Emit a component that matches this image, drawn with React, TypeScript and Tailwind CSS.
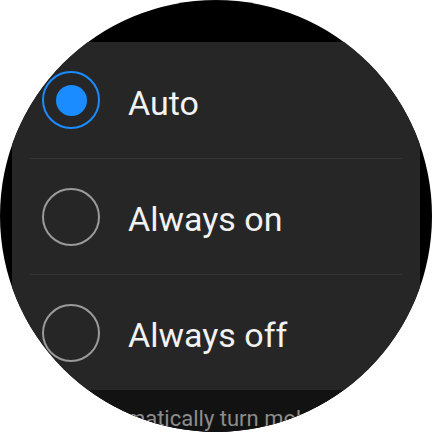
import React, { useState } from 'react';

type Mode = 'auto' | 'on' | 'off';

const options: { id: Mode; label: string }[] = [
  { id: 'auto', label: 'Auto' },
  { id: 'on', label: 'Always on' },
  { id: 'off', label: 'Always off' },
];

function Radio({ checked }: { checked: boolean }) {
  return (
    <span
      className={`flex h-[58px] w-[58px] shrink-0 items-center justify-center rounded-full border-2 ${
        checked ? 'border-[#1a8cff]' : 'border-[#9a9a9a]'
      }`}
    >
      {checked && <span className="h-[31px] w-[31px] rounded-full bg-[#1a8cff]" />}
    </span>
  );
}

export default function App() {
  const [mode, setMode] = useState<Mode>('auto');

  return (
    <div className="h-[432px] w-[432px] bg-white" style={{ fontFamily: 'Roboto, "Noto Sans", sans-serif' }}>
      <div className="h-[432px] w-[432px] overflow-hidden rounded-full bg-black pt-[42px]">
        <div className="ml-[12px] w-[408px] bg-[#262626]">
          {options.map((opt, i) => (
            <button
              key={opt.id}
              onClick={() => setMode(opt.id)}
              className="flex h-[116px] w-full flex-col text-left"
            >
              {i > 0 && <div className="ml-[18px] mr-[18px] h-px w-[372px] bg-[#343434]" />}
              <div className="flex flex-1 items-center pl-[30px]">
                <Radio checked={mode === opt.id} />
                <span className="ml-[28px] pt-[6px] text-[34px] text-[#f2f2f2]">{opt.label}</span>
              </div>
            </button>
          ))}
        </div>
        {/* help text, clipped by the round screen */}
        <div className="h-full bg-[#121212] pl-[80px] pt-[12px]">
          <p className="whitespace-nowrap text-[22px] text-[#8c8c8c]">
            Automatically turn mobile data on or off
          </p>
        </div>
      </div>
    </div>
  );
}
